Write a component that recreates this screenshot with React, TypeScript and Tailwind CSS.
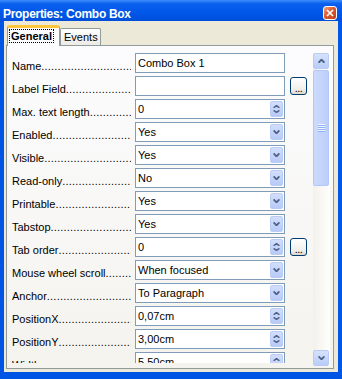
import React from 'react'

type Kind = 'text' | 'list' | 'spin'

interface Prop {
  label: string
  value: string
  kind: Kind
  browse?: boolean
}

const props: Prop[] = [
  { label: 'Name', value: 'Combo Box 1', kind: 'text' },
  { label: 'Label Field', value: '', kind: 'text', browse: true },
  { label: 'Max. text length', value: '0', kind: 'spin' },
  { label: 'Enabled', value: 'Yes', kind: 'list' },
  { label: 'Visible', value: 'Yes', kind: 'list' },
  { label: 'Read-only', value: 'No', kind: 'list' },
  { label: 'Printable', value: 'Yes', kind: 'list' },
  { label: 'Tabstop', value: 'Yes', kind: 'list' },
  { label: 'Tab order', value: '0', kind: 'spin', browse: true },
  { label: 'Mouse wheel scroll', value: 'When focused', kind: 'list' },
  { label: 'Anchor', value: 'To Paragraph', kind: 'list' },
  { label: 'PositionX', value: '0,07cm', kind: 'spin' },
  { label: 'PositionY', value: '3,00cm', kind: 'spin' },
  { label: 'Width', value: '5,50cm', kind: 'spin' },
]

function Chevron({ up = false, small = false }: { up?: boolean; small?: boolean }) {
  const w = 7
  const h = small ? 3 : 4
  const d = up ? `M0.6 ${h - 0.2} L${w / 2} 0.6 L${w - 0.6} ${h - 0.2}` : `M0.6 0.4 L${w / 2} ${h - 0.6} L${w - 0.6} 0.4`
  return (
    <svg width={w} height={h} viewBox={`0 0 ${w} ${h}`} className="block">
      <path d={d} stroke="#4D6185" strokeWidth={small ? 1.5 : 1.8} fill="none" />
    </svg>
  )
}

function DropButton() {
  return (
    <div className="w-[13px] h-[16px] m-[1px] shrink-0 rounded-[2px] border border-[#BCCDF5] bg-[linear-gradient(to_bottom,#D2DEFC,#B7CAF7)] flex items-center justify-center">
      <Chevron />
    </div>
  )
}

function SpinButton() {
  return (
    <div className="w-[13px] h-[16px] m-[1px] shrink-0 rounded-[2px] border border-[#BCCDF5] bg-[linear-gradient(to_bottom,#D2DEFC,#B7CAF7)] flex flex-col items-center justify-center gap-[2px]">
      <Chevron up small />
      <Chevron small />
    </div>
  )
}

function BrowseButton() {
  return (
    <div className="ml-[5px] mt-[1px] w-[17px] h-[18px] rounded-[3px] border border-[#003C74] bg-[linear-gradient(to_bottom,#FFFFFF,#F0EFEA_70%,#DCD7CB)] flex items-end justify-center pb-[2px]">
      <span className="leading-[8px] text-[11px] tracking-[-0.5px]">...</span>
    </div>
  )
}

function Row({ p }: { p: Prop }) {
  return (
    <div className="flex h-[20px] mb-[3px] shrink-0">
      <div className="w-[119px] mr-[4px] overflow-hidden whitespace-nowrap pt-[7px] leading-[13px]">
        {p.label}
        <span className="tracking-[0.2px]">{'.'.repeat(50)}</span>
      </div>
      <div className="w-[150px] h-[20px] border border-[#7F9DB9] bg-white flex">
        <div className="flex-1 pl-[2px] pt-[3px] leading-[13px] whitespace-nowrap overflow-hidden">{p.value}</div>
        {p.kind === 'list' && <DropButton />}
        {p.kind === 'spin' && <SpinButton />}
      </div>
      {p.browse && <BrowseButton />}
    </div>
  )
}

function ScrollButton({ up }: { up?: boolean }) {
  return (
    <div className="w-[16px] h-[16px] shrink-0 rounded-[2px] border border-[#B7CBF6] bg-[linear-gradient(to_bottom,#D6E1FD,#BACDF8)] flex items-center justify-center">
      <Chevron up={up} />
    </div>
  )
}

function Scrollbar() {
  return (
    <div className="w-[17px] h-[313px] flex flex-col bg-[linear-gradient(to_right,#F3F1EC,#FEFEFB)]">
      <ScrollButton up />
      <div className="mt-[1px] w-[16px] h-[116px] rounded-[2px] border border-[#B2C7F7] bg-[linear-gradient(to_right,#CCDAFD,#BCCFFA)] flex flex-col items-center justify-center">
        <div className="w-[7px] h-[2px] border-t border-t-[#F2F6FE] border-b border-b-[#8EB0F6]" />
        <div className="w-[7px] h-[2px] border-t border-t-[#F2F6FE] border-b border-b-[#8EB0F6]" />
        <div className="w-[7px] h-[2px] border-t border-t-[#F2F6FE] border-b border-b-[#8EB0F6]" />
        <div className="w-[7px] h-[2px] border-t border-t-[#F2F6FE] border-b border-b-[#8EB0F6]" />
      </div>
      <div className="flex-1" />
      <ScrollButton />
    </div>
  )
}

export default function App() {
  return (
    <div className="w-[342px] h-[379px] flex flex-col bg-[#0055E5] overflow-hidden select-none font-['Liberation_Sans',Arial,sans-serif] text-[11px] text-black">
      {/* Title bar */}
      <div className="h-[21px] shrink-0 flex items-start bg-[linear-gradient(to_bottom,#3D8FFB_0%,#0A5FEE_18%,#0057E8_60%,#004FDC_100%)]">
        <div className="flex-1 pl-[3px] pt-[7px] leading-[14px] text-[12px] font-bold text-white tracking-[-0.3px] whitespace-nowrap">
          Properties: Combo Box
        </div>
        <div className="mt-[6px] mr-[5px] w-[14px] h-[14px] rounded-[3px] border border-white bg-[linear-gradient(135deg,#F2A17F,#DC5A30_45%,#C2401A)] flex items-center justify-center">
          <svg width="8" height="8" viewBox="0 0 8 8">
            <path d="M1 1 L7 7 M7 1 L1 7" stroke="white" strokeWidth="1.7" />
          </svg>
        </div>
      </div>

      {/* Window body */}
      <div className="flex-1 flex px-[4px] pb-[7px]">
        <div className="flex-1 flex flex-col bg-[#ECE9D8] pt-[4px] pl-[2px] pr-[4px] pb-[3px]">
          {/* Tabs */}
          <div className="h-[21px] -mb-[1px] flex items-end pl-[1px] relative z-10">
            <div className="h-[21px] w-[53px] rounded-t-[3px] border-x border-[#919B9C] border-t-[3px] border-t-[#FFC83C] bg-[#FCFCFE] pl-[1px]">
              <div className="inline-block border border-dotted border-black px-[1px] leading-[12px] font-bold">General</div>
            </div>
            <div className="h-[17px] w-[41px] mb-[1px] rounded-t-[2px] border border-b-0 border-[#919B9C] bg-[linear-gradient(to_bottom,#FFFFFF,#ECEBE6)] pl-[3px] pt-[2px] leading-[13px]">
              Events
            </div>
          </div>

          {/* Pane */}
          <div className="flex-1 flex items-start border border-[#919B9C] bg-[linear-gradient(to_bottom,#FCFCFE,#F4F3EE)] pt-[7px] pl-[5px] pr-[3px]">
            <div className="flex-1 h-[310px] overflow-hidden flex flex-col">
              {props.map(p => (
                <Row key={p.label} p={p} />
              ))}
            </div>
            <Scrollbar />
          </div>
        </div>
      </div>
    </div>
  )
}
